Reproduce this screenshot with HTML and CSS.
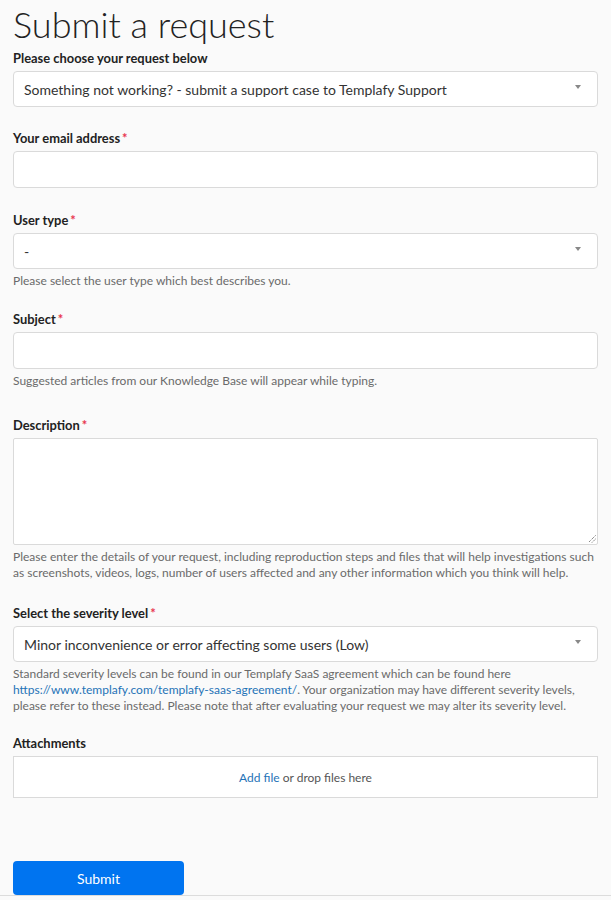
FILE: index.html
```html
<!DOCTYPE html>
<html lang="en">
<head>
<meta charset="utf-8">
<title>Submit a request</title>
<link rel="stylesheet" href="styles.css">
</head>
<body>
<main class="page">
  <h1 class="title">Submit a request</h1>
  <form class="form">
    <div class="field field-first">
      <label class="label">Please choose your request below</label>
      <div class="select"><span>Something not working? - submit a support case to Templafy Support</span><i class="caret"></i></div>
    </div>
    <div class="field field-email">
      <label class="label">Your email address<span class="req">*</span></label>
      <div class="input"></div>
    </div>
    <div class="field field-type">
      <label class="label">User type<span class="req">*</span></label>
      <div class="select"><span>-</span><i class="caret"></i></div>
      <p class="hint">Please select the user type which best describes you.</p>
    </div>
    <div class="field field-subject">
      <label class="label">Subject<span class="req">*</span></label>
      <div class="input"></div>
      <p class="hint">Suggested articles from our Knowledge Base will appear while typing.</p>
    </div>
    <div class="field field-desc">
      <label class="label">Description<span class="req">*</span></label>
      <div class="textarea">
        <svg class="grip" width="9" height="9" viewBox="0 0 9 9"><path d="M8.5 1.5L1.5 8.5M8.5 5L5 8.5" stroke="#555" stroke-width="1" stroke-dasharray="1 1"/></svg>
      </div>
      <p class="hint">Please enter the details of your request, including reproduction steps and files that will help investigations such as screenshots, videos, logs, number of users affected and any other information which you think will help.</p>
    </div>
    <div class="field field-sev">
      <label class="label">Select the severity level<span class="req">*</span></label>
      <div class="select"><span>Minor inconvenience or error affecting some users (Low)</span><i class="caret"></i></div>
      <p class="hint">Standard severity levels can be found in our Templafy SaaS agreement which can be found here <a class="link" href="#">https://www.templafy.com/templafy-saas-agreement/</a>. Your organization may have different severity levels, please refer to these instead. Please note that after evaluating your request we may alter its severity level.</p>
    </div>
    <div class="field field-att">
      <label class="label">Attachments</label>
      <div class="drop"><a class="link" href="#">Add file</a>&nbsp;or drop files here</div>
    </div>
    <div class="actions">
      <button class="submit" type="button">Submit</button>
    </div>
  </form>
</main>
</body>
</html>
```
FILE: styles.css
```css
html, body {
  margin: 0;
  padding: 0;
  background: #fafafa;
}
body {
  font-family: "Lato", "DejaVu Sans", sans-serif;
  color: #333;
}
.page {
  padding: 0 13px;
  border-bottom: 1px solid #dcdcdc;
  height: 896px;
  box-sizing: border-box;
}
.title {
  margin: 0;
  padding-top: 2px;
  font-size: 36px;
  font-weight: 300;
  line-height: 44px;
  color: #222;
}
.form {
  display: flex;
  flex-direction: column;
}
.field {
  display: flex;
  flex-direction: column;
}
.field-first { margin-top: 4px; }
.field-email { margin-top: 23px; }
.field-type { margin-top: 24px; }
.field-subject { margin-top: 22px; }
.field-desc { margin-top: 28px; }
.field-sev { margin-top: 24px; }
.field-att { margin-top: 21px; }
.label {
  font-size: 12.9px;
  font-weight: 700;
  line-height: 16px;
  margin-bottom: 5px;
  color: #222;
}
.req {
  color: #e8344e;
  margin-left: 2px;
}
.select, .input, .textarea, .drop {
  background: #fff;
  border: 1px solid #dadada;
  border-radius: 4px;
  box-sizing: border-box;
}
.select {
  height: 36px;
  display: flex;
  align-items: center;
  justify-content: space-between;
  padding: 0 16px 0 10px;
  font-size: 14px;
  color: #333;
}
.caret {
  width: 0;
  height: 0;
  border-left: 3px solid transparent;
  border-right: 3px solid transparent;
  border-top: 4px solid #888;
  margin-top: -4px;
}
.input { height: 37px; }
.textarea {
  height: 107px;
  border-radius: 2px;
  position: relative;
}
.grip {
  position: absolute;
  right: 1px;
  bottom: 1px;
}
.hint {
  margin: 4px 0 0;
  font-size: 12px;
  line-height: 16px;
  color: #6a6a6a;
}
.link {
  color: #1f73b7;
  text-decoration: none;
}
.drop {
  height: 42px;
  border-radius: 0;
  display: flex;
  align-items: center;
  justify-content: center;
  font-size: 12px;
  color: #555;
}
.actions {
  margin-top: 63px;
}
.submit {
  display: block;
  width: 171px;
  height: 34px;
  border: 0;
  border-radius: 4px;
  background: #0074f0;
  color: #fff;
  font-family: inherit;
  font-size: 14px;
  font-weight: 400;
  padding: 0;
}
```
